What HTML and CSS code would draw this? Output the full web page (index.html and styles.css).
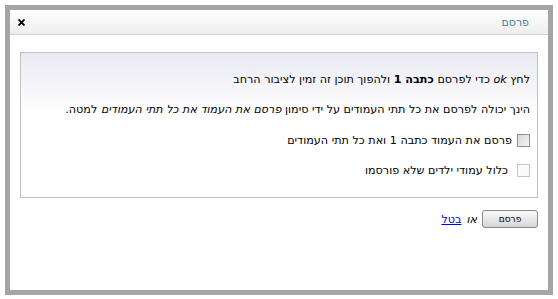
FILE: index.html
```html
<!DOCTYPE html>
<html lang="he" dir="rtl">
<head>
    <meta charset="UTF-8">
    <title>פרסם</title>
    <link rel="stylesheet" href="styles.css">
</head>
<body>

    <!-- Publish dialog -->
    <div class="dialog">
        <div class="dialog-header">
            <span class="dialog-title">פרסם</span>
            <span class="dialog-close">
                <svg width="7" height="7" viewBox="0 0 7 7"><path d="M0.5 0.5 L6.5 6.5 M6.5 0.5 L0.5 6.5" stroke="#000" stroke-width="1.8"/></svg>
            </span>
        </div>

        <div class="panel">
            <p>לחץ <em>ok</em> כדי לפרסם <strong>כתבה 1</strong> ולהפוך תוכן זה זמין לציבור הרחב</p>
            <p>הינך יכולה לפרסם את כל תתי העמודים על ידי סימון <em>פרסם את העמוד את כל תתי העמודים</em> למטה.</p>
            <label class="check"><span class="box"></span>פרסם את העמוד כתבה 1 ואת כל תתי העמודים</label>
            <label class="check disabled"><span class="box"></span>כלול עמודי ילדים שלא פורסמו</label>
        </div>

        <div class="actions">
            <button class="publish-btn">פרסם</button>
            <em>או</em>
            <a href="#">בטל</a>
        </div>
    </div>

</body>
</html>
```

FILE: styles.css
```css
* {
    margin: 0;
    padding: 0;
    box-sizing: border-box;
}

body {
    background: #fff;
    font-family: "DejaVu Sans", Tahoma, sans-serif;
    font-size: 11.2px;
    color: #000;
}

/* Dialog frame */
.dialog {
    margin: 5px;
    width: 548px;
    height: 290px;
    border: 5px solid #a5a5a5;
    background: #fff;
}

.dialog-header {
    height: 25px;
    display: flex;
    justify-content: space-between;
    align-items: center;
    padding: 0 19px 0 8px;
    background: linear-gradient(#ffffff, #eeeeee);
    border-bottom: 1px solid #d2d2d2;
}

.dialog-title {
    color: #34889c;
    font-size: 11px;
}

.dialog-close svg {
    display: block;
}

/* Content panel */
.panel {
    margin: 17px 10px 0;
    height: 146px;
    border: 1px solid #c2c2c2;
    padding: 12px 7px 0;
    background: linear-gradient(#e9e9f3, #ffffff 60px);
}

.panel p,
.check {
    display: flex;
    align-items: center;
    height: 30px;
}

.panel p {
    display: block;
    line-height: 30px;
}

.check .box {
    width: 13px;
    height: 13px;
    margin-left: 5px;
    border: 1px solid #8f8f8f;
    background: linear-gradient(135deg, #d8d8d8, #f4f4f4);
}

.check.disabled .box {
    border-color: #c6c6c6;
    background: #fafafa;
    margin-left: 9px;
}

/* Footer */
.actions {
    display: flex;
    align-items: center;
    gap: 5px;
    padding: 12px 10px 0;
}

.publish-btn {
    width: 56px;
    height: 18px;
    border: 1px solid #8a8a8a;
    border-radius: 3px;
    background: linear-gradient(#fafafa, #d6d6d6);
    font-family: "DejaVu Sans", Tahoma, sans-serif;
    font-size: 9px;
    color: #000;
}

.actions a {
    color: #0000ee;
}
```
